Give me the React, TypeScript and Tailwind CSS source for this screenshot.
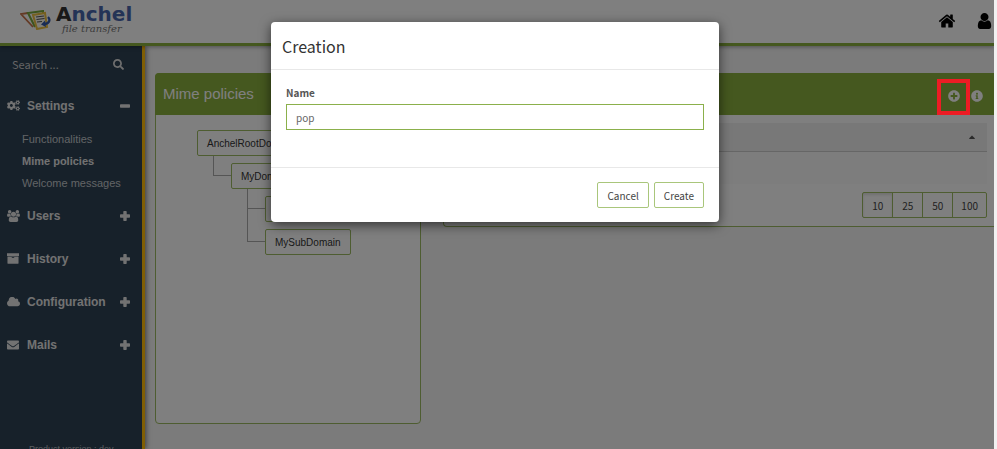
import React from "react";
import {
  FaCogs,
  FaSearch,
  FaEnvelope,
  FaPlusCircle,
  FaInfoCircle,
  FaCaretUp,
} from "react-icons/fa";

const sans = "font-['Liberation_Sans',Arial,sans-serif]";
const source = "font-['Noto_Sans_CJK_SC',sans-serif]";

function Glyph({ d, box, className }: { d: string; box: string; className: string }) {
  return (
    <svg viewBox={box} className={className} fill="currentColor" aria-hidden="true">
      <path d={d} />
    </svg>
  );
}

const usersPath =
  "M593 896q-162 5-265 128h-134q-82 0-138-40.5t-56-118.5q0-353 124-353 6 0 43.5 21t97.5 42.5 119 21.5q67 0 133-23-5 37-5 66 0 139 81 256zm1071 637q0 120-73 189.5t-194 69.5h-874q-121 0-194-69.5t-73-189.5q0-53 3.5-103.5t14-109 26.5-108.5 43-97.5 62-81 85.5-53.5 111.5-20q10 0 43 21.5t73 48 107 48 135 21.5 135-21.5 107-48 73-48 43-21.5q61 0 111.5 20t85.5 53.5 62 81 43 97.5 26.5 108.5 14 109 3.5 103.5zm-1024-1277q0 106-75 181t-181 75-181-75-75-181 75-181 181-75 181 75 75 181zm704 384q0 159-112.5 271.5t-271.5 112.5-271.5-112.5-112.5-271.5 112.5-271.5 271.5-112.5 271.5 112.5 112.5 271.5zm576 225q0 78-56 118.5t-138 40.5h-134q-103-123-265-128 81-117 81-256 0-29-5-66 66 23 133 23 59 0 119-21.5t97.5-42.5 43.5-21q124 0 124 353zm-128-609q0 106-75 181t-181 75-181-75-75-181 75-181 181-75 181 75 75 181z";
const homePath =
  "M1472 992v480q0 26-19 45t-45 19h-384v-384h-256v384h-384q-26 0-45-19t-19-45v-480q0-1 .5-3t.5-3l575-474 575 474q1 2 1 6zm223-69l-62 74q-8 9-21 11h-3q-13 0-21-7l-692-577-692 577q-12 8-24 7-13-2-21-11l-62-74q-8-10-7-23.5t11-21.5l719-599q32-26 76-26t76 26l244 204v-195q0-14 9-23t23-9h192q14 0 23 9t9 23v408l219 182q10 8 11 21.5t-7 23.5z";
const userPath =
  "M1536 1399q0 109-62.5 187t-150.5 78h-854q-88 0-150.5-78t-62.5-187q0-85 8.5-160.5t31.5-152 58.5-131 94-89 134.5-34.5q131 128 313 128t313-128q76 0 134.5 34.5t94 89 58.5 131 31.5 152 8.5 160.5zm-256-887q0 159-112.5 271.5t-271.5 112.5-271.5-112.5-112.5-271.5 112.5-271.5 271.5-112.5 271.5 112.5 112.5 271.5z";
const cloudPath =
  "M1984 1152q0 159-112.5 271.5t-271.5 112.5h-1088q-185 0-316.5-131.5t-131.5-316.5q0-132 71-241.5t187-163.5q-2-28-2-43 0-212 150-362t362-150q158 0 286.5 88t187.5 230q70-62 166-62 106 0 181 75t75 181q0 75-41 138 129 30 213 134.5t84 239.5z";
const archivePath =
  "M0 0h1664v384h-1664zM64 448h1536v960q0 64-64 64h-1408q-64 0-64-64zM704 560q-64 0-64 56t64 56h256q64 0 64-56t-64-56z";
const plusPath = "M4 0h2q.7 0 .7.7v2.6h2.6q.7 0 .7.7v2q0 .7-.7.7h-2.6v2.6q0 .7-.7.7h-2q-.7 0-.7-.7v-2.6h-2.6q-.7 0-.7-.7v-2q0-.7.7-.7h2.6v-2.6q0-.7.7-.7z";
const minusPath = "M.7 3.3h8.6q.7 0 .7.7v2q0 .7-.7.7h-8.6q-.7 0-.7-.7v-2q0-.7.7-.7z";

function Logo() {
  return (
    <a href="#" className="flex items-start pl-5 pt-1">
      <svg viewBox="0 0 32 20" className="mt-[6px] h-5 w-8" aria-hidden="true">
        <path d="M0 4l8-1 5 14z" fill="#fff" />
        <path d="M13 17L1 4l7-1" fill="none" stroke="#c8744a" strokeWidth="1.8" />
        <path d="M15 17L8 3l15-2v3" fill="#fff" stroke="#78a83c" strokeWidth="2" />
        <path d="M13 5l12-2 2 14-10 2z" fill="#fffdf2" stroke="#ecc040" strokeWidth="2" />
        <path d="M16 7l8-1M16.500 9.500l8-1M17 12l5-.5" stroke="#555" strokeWidth="1.1" />
        <path d="M28 7c3 3 1 7-4 7" fill="none" stroke="#3459a8" strokeWidth="2.2" />
        <path d="M25 10.500l-4 4 5 2.500z" fill="#3459a8" />
      </svg>
      <span className="ml-1 flex flex-col">
        <span className="font-['DejaVu_Sans',sans-serif] text-xl font-bold leading-5 text-[#4966ad]">
          <span className="text-[#333]">A</span>nchel
        </span>
        <span className="pl-[6px] font-['DejaVu_Serif',serif] text-[10px] italic leading-[10px] text-[#777]">
          file transfer
        </span>
      </span>
    </a>
  );
}

function MenuRow({ icon, label, open }: { icon: React.ReactNode; label: string; open?: boolean }) {
  return (
    <button type="button" className={`${sans} flex h-[43px] w-full items-center pl-[7px] pr-3 text-xs font-bold text-[#e4e4e4]`}>
      <span className="flex w-5 items-center">{icon}</span>
      <span className="flex-1 text-left">{label}</span>
      <Glyph d={open ? minusPath : plusPath} box="0 0 10 10" className="size-[10px]" />
    </button>
  );
}

function Sidebar() {
  const sub = "flex h-[22px] items-center";
  return (
    <nav className="flex w-[145px] shrink-0 flex-col border-r-[3px] border-[#ffbd08] bg-[#2e4254] shadow-[1px_0_5px_rgba(0,0,0,0.5)]">
      <label className="flex h-9 items-center pl-3 pr-[18px] text-[#ddd]">
        <input
          aria-label="Search"
          placeholder="Search ..."
          className={`${source} w-full min-w-0 bg-transparent text-[11px] placeholder:text-[#c8c8c8] outline-none`}
        />
        <FaSearch className="size-[11px] shrink-0" />
      </label>
      <div className="pb-px pt-[2px]">
        <MenuRow icon={<FaCogs className="size-[13px]" />} label="Settings" open />
      </div>
      <div className={`${sans} flex flex-col pl-[22px] text-[11px] text-[#c4c8cc]`}>
        <a href="#" className={sub}>Functionalities</a>
        <a href="#" className={`${sub} font-bold text-[#e4e4e4]`}>Mime policies</a>
        <a href="#" className={sub}>Welcome messages</a>
      </div>
      <MenuRow icon={<Glyph d={usersPath} box="0 0 1920 1792" className="h-3 w-[13px]" />} label="Users" />
      <MenuRow icon={<Glyph d={archivePath} box="0 0 1664 1472" className="h-[11px] w-3" />} label="History" />
      <MenuRow icon={<Glyph d={cloudPath} box="64 256 1920 1280" className="h-[10px] w-[13px]" />} label="Configuration" />
      <MenuRow icon={<FaEnvelope className="size-3" />} label="Mails" />
      <div className={`${sans} mt-auto h-[7px] pl-[29px] text-[9px] leading-[14px] text-[#b8bcc0]`}>Product version : dev</div>
    </nav>
  );
}

type TreeNode = { name: string; children?: TreeNode[] };

const domains: TreeNode = {
  name: "AnchelRootDomain",
  children: [{ name: "MyDomain", children: [{ name: "TopDomain" }, { name: "MySubDomain" }] }],
};

function Domain({ node }: { node: TreeNode }) {
  return (
    <div>
      <button type="button" className="block h-[26px] rounded-xs border border-[#9dbb62] bg-white px-[9px] text-[#333]">
        {node.name}
      </button>
      {node.children && (
        <ul className="pl-4">
          {node.children.map((child, i) => (
            <li key={child.name} className="flex">
              <div className={`w-[18px] shrink-0 ${i < node.children!.length - 1 ? "border-l border-[#aaa]" : ""}`}>
                <div className={`h-5 border-b border-[#aaa] ${i === node.children!.length - 1 ? "border-l" : ""}`} />
              </div>
              <div className="pt-[7px]">
                <Domain node={child} />
              </div>
            </li>
          ))}
        </ul>
      )}
    </div>
  );
}

function Dialog() {
  const button = "h-[26px] rounded-xs border border-[#a9c67b] bg-white px-[9px] text-[10px] text-[#444]";
  return (
    <div className="absolute inset-0 z-10 bg-black/50 pr-1 pt-[22px]">
      <form
        role="dialog"
        aria-labelledby="dialog-title"
        onSubmit={(e) => e.preventDefault()}
        className={`${source} mx-auto w-full max-w-[448px] rounded bg-white shadow-[0_3px_12px_rgba(0,0,0,0.6)]`}
      >
        <h2 id="dialog-title" className="flex h-12 items-center border-b border-[#e8e8e8] pl-[11px] text-base text-[#333]">
          Creation
        </h2>
        <div className="h-[97px] px-[15px] pt-4">
          <label htmlFor="name" className="block h-[18px] text-[10px] font-bold leading-[14px] text-[#555]">
            Name
          </label>
          <input
            id="name"
            defaultValue="pop"
            className="block h-[26px] w-full border border-[#8bb04b] px-[9px] text-[10px] text-[#666] outline-none"
            autoFocus
          />
        </div>
        <div className="flex h-[55px] items-center justify-end gap-[5px] border-t border-[#e8e8e8] pr-[15px]">
          <button type="button" className={button}>Cancel</button>
          <button type="submit" className={button}>Create</button>
        </div>
      </form>
    </div>
  );
}

export default function App() {
  return (
    <div className="h-screen overflow-hidden bg-[#f1f1f1] pr-[3px]">
      <div className="relative flex h-full flex-col overflow-hidden bg-[#f6f6f6]">
        <header className="z-1 flex h-[46px] shrink-0 items-start justify-between border-b-[3px] border-[#8bb03f] bg-white shadow-[0_1px_4px_rgba(0,0,0,0.35)]">
          <Logo />
          <div className="flex gap-[21px] pr-[2px] pt-3 text-black">
            <button type="button" aria-label="Home"><Glyph d={homePath} box="0 0 1792 1792" className="size-[18px]" /></button>
            <button type="button" aria-label="Account"><Glyph d={userPath} box="192 128 1408 1536" className="h-4 w-[15px]" /></button>
          </div>
        </header>
        <div className="flex min-h-0 flex-1">
          <Sidebar />
          <main className={`${sans} flex min-w-0 flex-1 items-start gap-[22px] pl-[10px] pt-[27px]`}>
            <section className="w-[266px] shrink-0 rounded-sm border border-[#9dbb62] bg-white">
              <h1 className="-mx-px -mt-px flex h-[42px] items-center rounded-t-sm bg-[#8bb03f] pl-2 text-[15px] text-white">
                Mime policies
              </h1>
              <div className="h-[308px] pl-[41px] pt-[15px] text-[10px]">
                <Domain node={domains} />
              </div>
            </section>
            <section className="min-w-0 flex-1 rounded-l-sm border-b border-l border-[#9dbb62] bg-white">
              <div className="-ml-px flex h-[42px] items-center justify-end gap-[11px] bg-[#8bb03f] pr-[11px] pt-1 text-white">
                <button type="button" aria-label="Add"><FaPlusCircle className="size-3" /></button>
                <button type="button" aria-label="Information"><FaInfoCircle className="size-3" /></button>
              </div>
              <div className="px-[7px] pb-2 pt-2">
                <table className="w-full">
                  <thead>
                    <tr className="h-[28px] border-b border-[#ccc] bg-[#f1f1f1]">
                      <th className="pr-[10px]"><FaCaretUp className="ml-auto size-[10px] text-[#555]" /></th>
                    </tr>
                  </thead>
                  <tbody>
                    <tr className="h-[33px] bg-[#fafafa]"><td /></tr>
                  </tbody>
                </table>
                <div className={`${source} mt-2 flex justify-end text-[10px] text-[#444]`}>
                  <div className="flex h-[26px] divide-x divide-[#9dbb62] rounded-xs border border-[#9dbb62]">
                    <button type="button" className="w-[30px] shadow-[inset_0_2px_3px_rgba(0,0,0,0.12)]">10</button>
                    <button type="button" className="w-[30px]">25</button>
                    <button type="button" className="w-[30px]">50</button>
                    <button type="button" className="px-2">100</button>
                  </div>
                </div>
              </div>
            </section>
          </main>
        </div>
        <Dialog />
        <div className="pointer-events-none absolute right-6 top-[79px] z-20 h-9 w-[33px] border-4 border-[#ed1c24]" />
      </div>
    </div>
  );
}
